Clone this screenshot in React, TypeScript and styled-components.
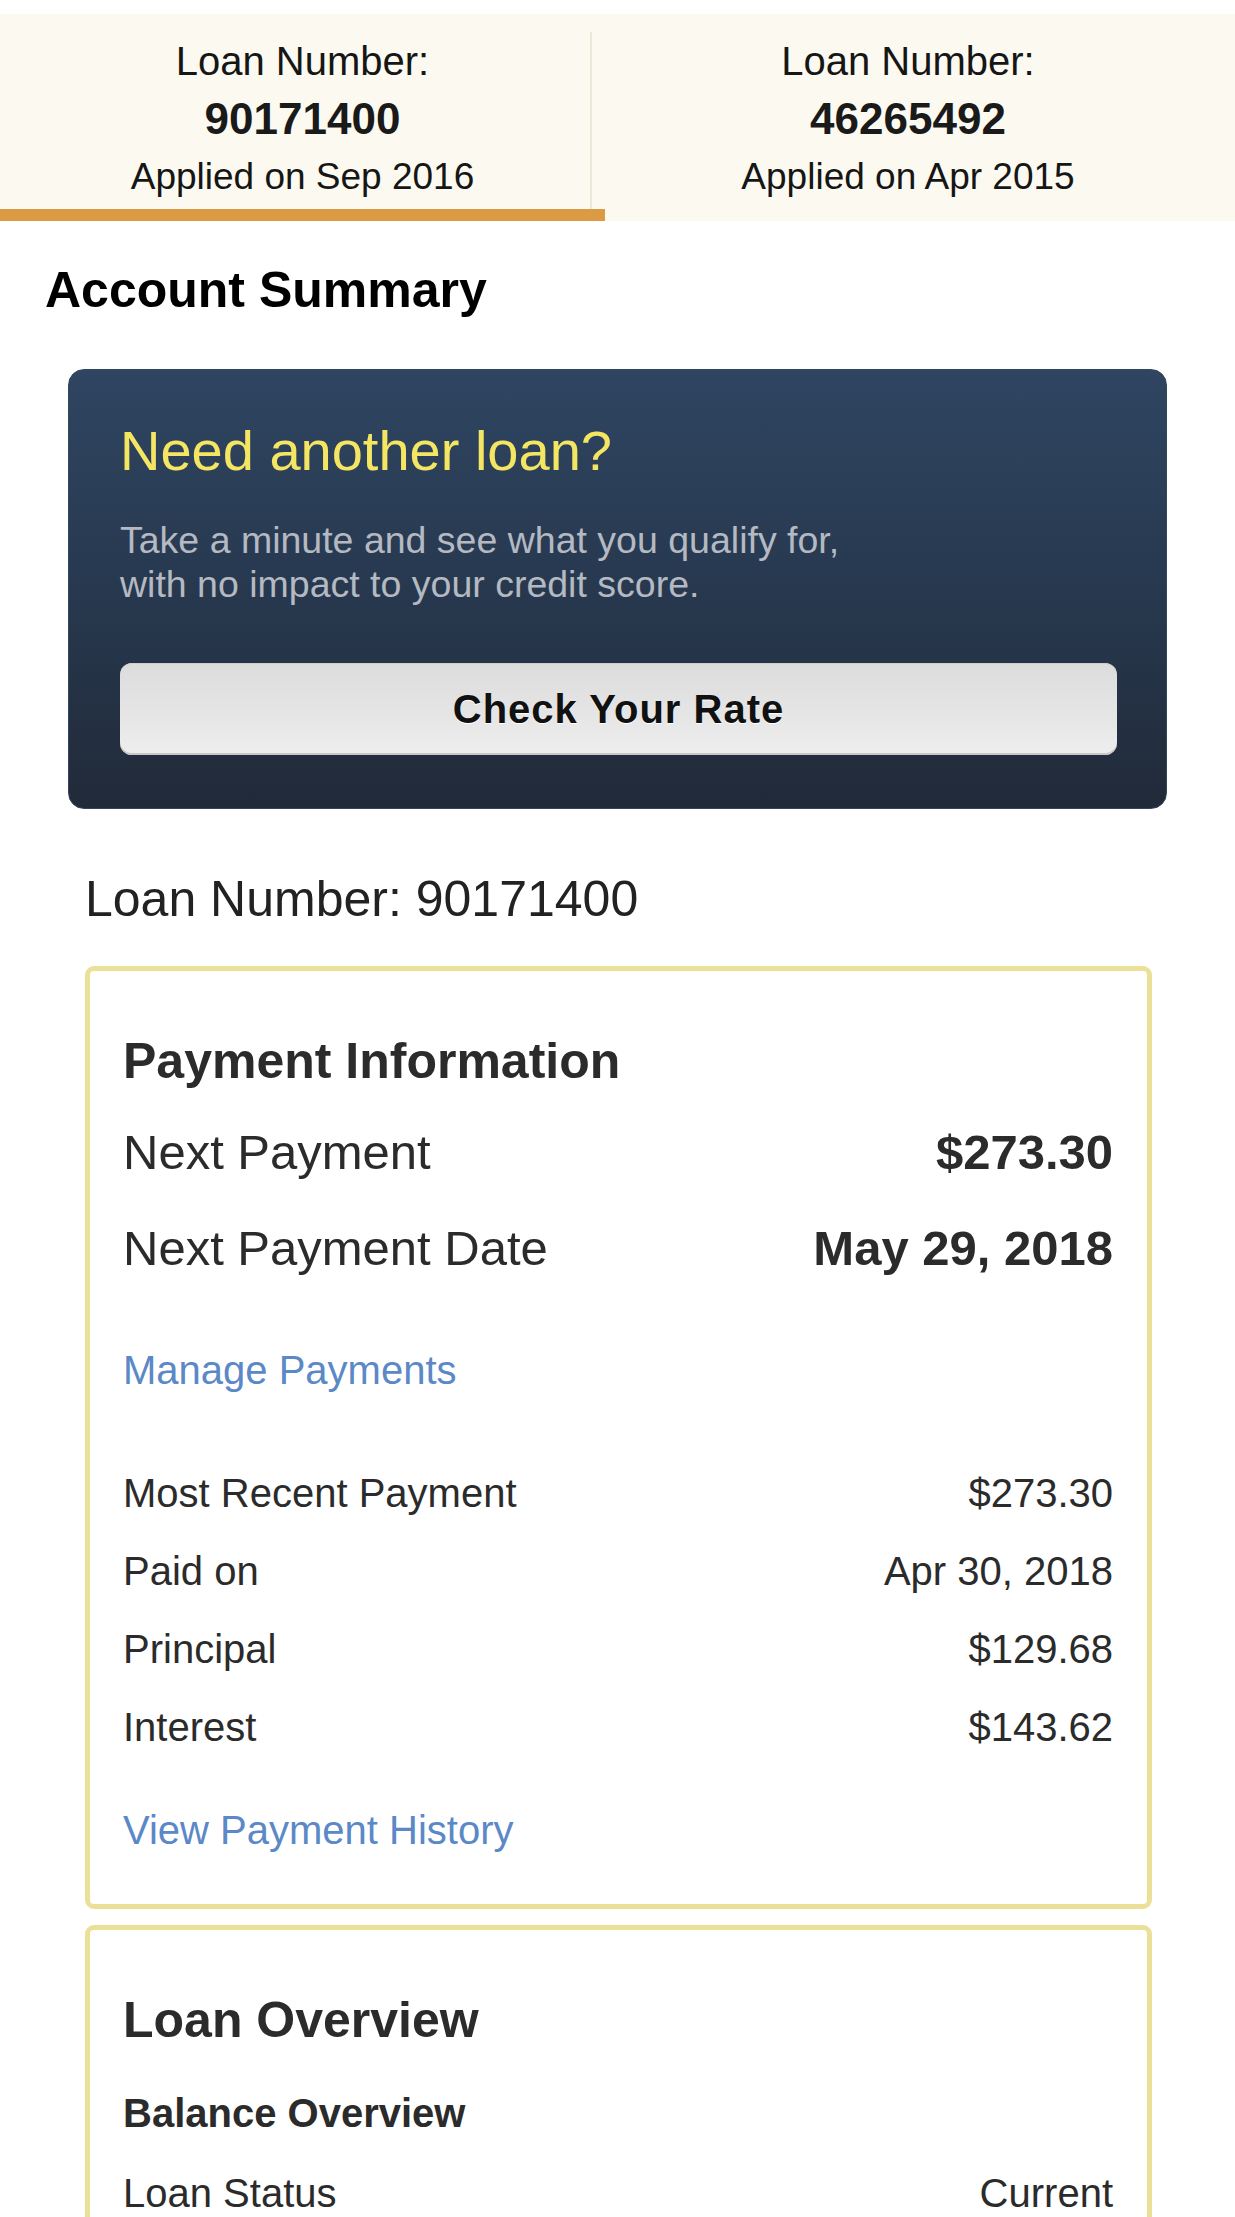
import React from "react";
import styled, { createGlobalStyle } from "styled-components";

const GlobalStyle = createGlobalStyle`
  html, body { margin: 0; padding: 0; background: #ffffff; }
  body {
    font-family: "Liberation Sans", Arial, Helvetica, sans-serif;
    color: #2b2b2b;
    -webkit-font-smoothing: antialiased;
  }
  * { box-sizing: border-box; }
`;

const Page = styled.div`
  width: 1235px;
  padding-top: 14px;
  padding-bottom: 60px;
`;

const TabBar = styled.nav`
  display: flex;
  background: #fcfaf0;
`;

const Tab = styled.div<{ $active?: boolean }>`
  position: relative;
  flex: ${(p) => (p.$active ? "0 0 605px" : "1 1 auto")};
  display: flex;
  flex-direction: column;
  align-items: center;
  padding: 18px ${(p) => (p.$active ? "0" : "24px")} 3px 0;
  border-bottom: 12px solid ${(p) => (p.$active ? "#dc9a45" : "transparent")};
  color: #161616;
  cursor: pointer;

  ${(p) =>
    p.$active &&
    `
    &::after {
      content: "";
      position: absolute;
      right: 13px;
      top: 18px;
      bottom: 0;
      width: 2px;
      background: #ebe8da;
    }
  `}
`;

const TabLabel = styled.span<{ $size: number }>`
  font-size: ${(p) => p.$size}px;
  line-height: 58px;
`;

const TabNumber = styled.span`
  font-size: 44px;
  line-height: 58px;
  font-weight: 700;
  color: #1a1a1a;
`;

const PageTitle = styled.h1`
  margin: 39px 0 0 45px;
  font-size: 50px;
  line-height: 60px;
  font-weight: 700;
  color: #000;
`;

const Banner = styled.section`
  margin: 49px 68px 0;
  padding: 48px 49px 53px 51px;
  border-radius: 16px;
  border: 1px solid #33475d;
  background: linear-gradient(180deg, #2f4561 0%, #283a51 45%, #212a39 100%);
`;

const BannerTitle = styled.h2`
  margin: 0;
  font-size: 56px;
  line-height: 66px;
  font-weight: 400;
  color: #f4e563;
`;

const BannerText = styled.p`
  margin: 34px 0 0;
  font-size: 37.5px;
  line-height: 44px;
  color: #b4b9c2;
`;

const RateButton = styled.button`
  display: block;
  width: 100%;
  height: 92px;
  margin-top: 57px;
  border: none;
  border-radius: 12px;
  background: linear-gradient(180deg, #dcdcdc 0%, #e6e6e6 60%, #eeeeee 100%);
  box-shadow: inset 0 -2px 0 #c8c8c8, inset 0 1px 0 #cfcfcf;
  font-family: inherit;
  font-size: 40px;
  font-weight: 700;
  letter-spacing: 1px;
  color: #111;
  text-shadow: 0 1px 0 #ffffff;
  cursor: pointer;
`;

const LoanHeading = styled.h2`
  margin: 60px 0 0 85px;
  font-size: 50px;
  line-height: 60px;
  font-weight: 400;
  color: #222;
`;

const Card = styled.section<{ $gap?: number }>`
  margin: ${(p) => p.$gap ?? 18}px 83px 0 85px;
  padding: 61px 34px 50px 33px;
  border: 5px solid #ece098;
  border-radius: 9px;
  background: #fff;
`;

const CardTitle = styled.h3`
  margin: 0;
  font-size: 50px;
  line-height: 58px;
  font-weight: 700;
  color: #2b2b2b;
`;

const PrimaryRows = styled.div`
  margin-top: 15px;
`;

const PrimaryRow = styled.div`
  display: flex;
  justify-content: space-between;
  align-items: center;
  padding: 18px 0;
  font-size: 49px;
  line-height: 58px;
  color: #2b2b2b;

  & + & {
    padding-top: 20px;
  }
`;

const Strong = styled.span`
  font-weight: 700;
`;

const CardLink = styled.a<{ $gap: number }>`
  display: block;
  margin-top: ${(p) => p.$gap}px;
  font-size: 40px;
  line-height: 48px;
  color: #5b88c6;
  text-decoration: none;
  cursor: pointer;
`;

const DetailList = styled.div<{ $gap: number }>`
  margin-top: ${(p) => p.$gap}px;
`;

const DetailRow = styled.div`
  display: flex;
  justify-content: space-between;
  align-items: center;
  padding: 15px 0;
  font-size: 40px;
  line-height: 48px;
  color: #2b2b2b;
`;

const SubTitle = styled.h4`
  margin: 40px 0 0;
  font-size: 40px;
  line-height: 48px;
  font-weight: 700;
  color: #2b2b2b;
`;

const recent = [
  { label: "Most Recent Payment", value: "$273.30" },
  { label: "Paid on", value: "Apr 30, 2018" },
  { label: "Principal", value: "$129.68" },
  { label: "Interest", value: "$143.62" },
];

export default function App() {
  return (
    <>
      <GlobalStyle />
      <Page>
        <TabBar>
          <Tab $active>
            <TabLabel $size={40}>Loan Number:</TabLabel>
            <TabNumber>90171400</TabNumber>
            <TabLabel $size={37}>Applied on Sep 2016</TabLabel>
          </Tab>
          <Tab>
            <TabLabel $size={40}>Loan Number:</TabLabel>
            <TabNumber>46265492</TabNumber>
            <TabLabel $size={37}>Applied on Apr 2015</TabLabel>
          </Tab>
        </TabBar>

        <PageTitle>Account Summary</PageTitle>

        <Banner>
          <BannerTitle>Need another loan?</BannerTitle>
          <BannerText>
            Take a minute and see what you qualify for,
            <br />
            with no impact to your credit score.
          </BannerText>
          <RateButton>Check Your Rate</RateButton>
        </Banner>

        <LoanHeading>Loan Number: 90171400</LoanHeading>

        <Card $gap={37}>
          <CardTitle>Payment Information</CardTitle>
          <PrimaryRows>
            <PrimaryRow>
              <span>Next Payment</span>
              <Strong>$273.30</Strong>
            </PrimaryRow>
            <PrimaryRow>
              <span>Next Payment Date</span>
              <Strong>May 29, 2018</Strong>
            </PrimaryRow>
          </PrimaryRows>
          <CardLink $gap={51}>Manage Payments</CardLink>
          <DetailList $gap={60}>
            {recent.map((r) => (
              <DetailRow key={r.label}>
                <span>{r.label}</span>
                <span>{r.value}</span>
              </DetailRow>
            ))}
          </DetailList>
          <CardLink $gap={40}>View Payment History</CardLink>
        </Card>

        <Card $gap={16}>
          <CardTitle>Loan Overview</CardTitle>
          <SubTitle>Balance Overview</SubTitle>
          <DetailList $gap={17}>
            <DetailRow>
              <span>Loan Status</span>
              <span>Current</span>
            </DetailRow>
          </DetailList>
        </Card>
      </Page>
    </>
  );
}
